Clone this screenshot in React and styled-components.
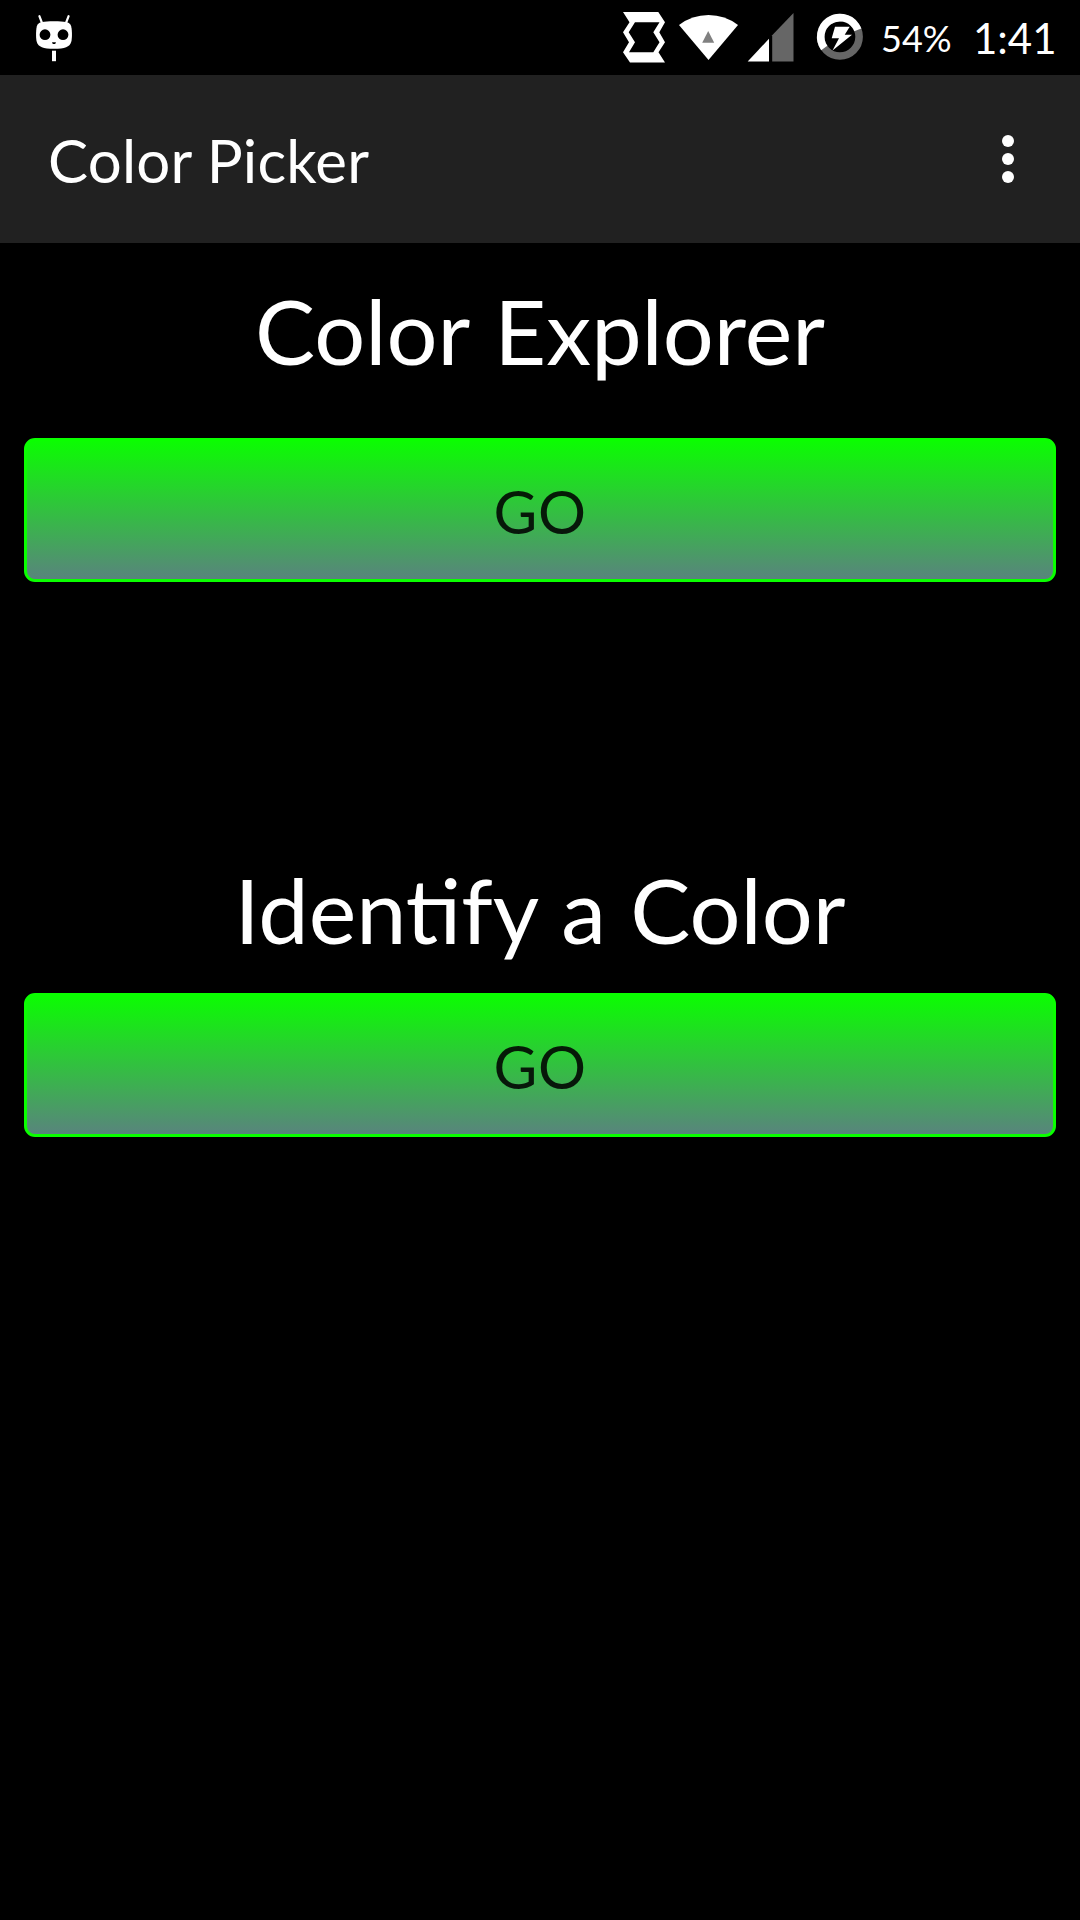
import React from 'react';
import styled, { createGlobalStyle } from 'styled-components';

const GlobalStyle = createGlobalStyle`
  * { box-sizing: border-box; }
  body {
    margin: 0;
    background: #000;
    color: #fff;
    font-family: Lato, "Open Sans", sans-serif;
  }
`;

const Screen = styled.div`
  width: 1080px;
  height: 1920px;
  display: flex;
  flex-direction: column;
  background: #000;
  overflow: hidden;
`;

const StatusBar = styled.header`
  height: 75px;
  flex: none;
  display: flex;
  align-items: flex-start;
  padding-left: 20px;
`;

const StatusIcon = styled.svg`
  display: block;
  flex: none;
  width: ${(p) => p.$width}px;
  height: 75px;
`;

const StatusIcons = styled.div`
  display: flex;
  width: 466px;
  margin-left: auto;
`;

const BatteryLevel = styled.span`
  width: 92px;
  flex: none;
  padding-top: 17px;
  font-size: 36px;
  line-height: 43px;
  white-space: nowrap;
`;

const Clock = styled.span`
  padding-top: 13px;
  font-size: 42px;
  line-height: 51px;
  white-space: nowrap;
`;

const AppBar = styled.div`
  height: 168px;
  flex: none;
  display: flex;
  align-items: center;
  justify-content: space-between;
  padding: 0 66px 0 48px;
  background: #212121;
`;

const Title = styled.h1`
  margin: 0;
  padding-top: 2px;
  font-size: 60px;
  line-height: 72px;
  font-weight: 400;
  letter-spacing: 0.2px;
`;

const MenuButton = styled.button`
  display: flex;
  flex-direction: column;
  gap: 6px;
  margin: 0;
  padding: 0;
  border: 0;
  background: none;
`;

const Dot = styled.span`
  width: 12px;
  height: 12px;
  border-radius: 50%;
  background: #fff;
`;

const Content = styled.main`
  display: flex;
  flex-direction: column;
  gap: 273px;
  padding: 33px 24px 0;
`;

const Section = styled.section`
  display: flex;
  flex-direction: column;
  gap: ${(p) => p.$gap}px;
`;

const Heading = styled.h2`
  margin: 0;
  font-size: 90px;
  line-height: 108px;
  font-weight: 400;
  text-align: center;
  word-spacing: ${(p) => p.$wordSpacing}px;
`;

const GoButton = styled.button`
  height: 144px;
  padding: 2px 0 0;
  border: 3px solid #0aff00;
  border-radius: 11px;
  background: linear-gradient(#0aff00, #5a827f) border-box;
  color: rgba(0, 0, 0, 0.87);
  font-family: inherit;
  font-size: 60px;
  line-height: 72px;
  letter-spacing: 0.5px;
  text-align: center;
`;

function RobotIcon() {
  return (
    <StatusIcon $width={70} viewBox="20 0 70 75">
      <path d="M39.4 16.2L42 23M68.6 16.2L66 23" stroke="#fff" strokeWidth="2.2" strokeLinecap="round" />
      <path
        d="M54 21.2C65 21.2 69 22 70.6 24.8C72.2 28 72.4 38 71.2 42C69.6 47 65 48.8 54 48.8C43 48.8 38.4 47 36.8 42C35.6 38 35.8 28 37.4 24.8C39 22 43 21.2 54 21.2Z"
        fill="#fff"
      />
      <circle cx="45" cy="34.7" r="5.4" />
      <circle cx="63" cy="34.7" r="5.4" />
      <path d="M52 42.3H56L55.2 44H52.8Z" />
      <rect x="52" y="50.7" width="4" height="10.5" fill="#fff" />
    </StatusIcon>
  );
}

function RotateIcon() {
  return (
    <StatusIcon $width={60} viewBox="614 0 60 75">
      <path
        fill="#fff"
        fillRule="evenodd"
        d="M623 12H658.3L665 22.2L659.3 32.3L665 42.3L658.5 52.3L665 62.5H630L623 52.3L629 42.3L623 32.3L629.5 22.2ZM635 22.3L628.7 32.3L635 42.3L629 52.2H653.3L659.5 42.3L653.3 32.3L659.5 22.3Z"
      />
    </StatusIcon>
  );
}

function WifiIcon() {
  return (
    <StatusIcon $width={69} viewBox="674 0 69 75">
      <path d="M679 25Q692 15 708.5 15T738 25L708.5 60Z" fill="#fff" />
      <path d="M708.2 31L714.2 42.7H702.2Z" fill="#808080" />
    </StatusIcon>
  );
}

function SignalIcon() {
  return (
    <StatusIcon $width={67} viewBox="743 0 67 75">
      <path d="M747.7 61.5L769 38.7V61.5Z" fill="#fff" />
      <path d="M772.2 35.3L793.5 13V61.5H772.2Z" fill="#666" />
    </StatusIcon>
  );
}

function BatteryIcon() {
  return (
    <StatusIcon $width={71} viewBox="810 0 71 75">
      <circle cx="839.9" cy="36.8" r="19.2" fill="none" stroke="#666" strokeWidth="7.6" />
      <circle
        cx="839.9"
        cy="36.8"
        r="19.2"
        fill="none"
        stroke="#fff"
        strokeWidth="7.6"
        pathLength="100"
        strokeDasharray="54 46"
        transform="rotate(144.5 839.9 36.8)"
      />
      <path d="M835 26.8H849.7L844.7 34.7H852L832.5 50.5L839 38.2H831.7Z" fill="#fff" />
    </StatusIcon>
  );
}

function ActionSection({ title, gap, wordSpacing }) {
  return (
    <Section $gap={gap}>
      <Heading $wordSpacing={wordSpacing}>{title}</Heading>
      <GoButton type="button">GO</GoButton>
    </Section>
  );
}

export default function App() {
  return (
    <Screen>
      <GlobalStyle />
      <StatusBar>
        <RobotIcon />
        <StatusIcons>
          <RotateIcon />
          <WifiIcon />
          <SignalIcon />
          <BatteryIcon />
          <BatteryLevel>54%</BatteryLevel>
          <Clock>1:41</Clock>
        </StatusIcons>
      </StatusBar>
      <AppBar>
        <Title>Color Picker</Title>
        <MenuButton type="button" aria-label="More options">
          <Dot />
          <Dot />
          <Dot />
        </MenuButton>
      </AppBar>
      <Content>
        <ActionSection title="Color Explorer" gap={54} wordSpacing={3} />
        <ActionSection title="Identify a Color" gap={30} wordSpacing={1.3} />
      </Content>
    </Screen>
  );
}
